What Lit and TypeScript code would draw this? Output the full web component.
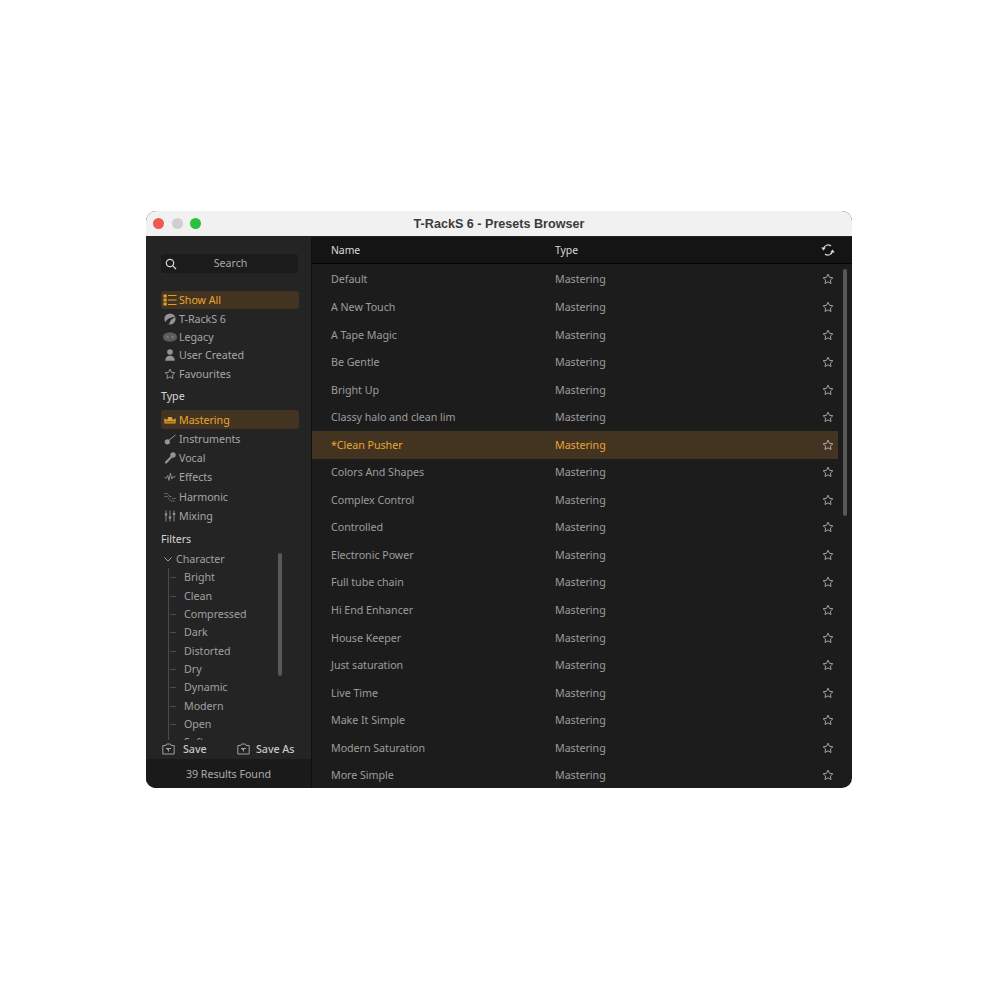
import { LitElement, html, css, svg } from "lit";
import { customElement } from "lit/decorators.js";

const names = ["Default","A New Touch","A Tape Magic","Be Gentle","Bright Up","Classy halo and clean lim","*Clean Pusher","Colors And Shapes","Complex Control","Controlled","Electronic Power","Full tube chain","Hi End Enhancer","House Keeper","Just saturation","Live Time","Make It Simple","Modern Saturation","More Simple"];
const filters = ["Bright","Clean","Compressed","Dark","Distorted","Dry","Dynamic","Modern","Open","Soft"];

const star = (size = 12) => html`<svg width=${size} height=${size} viewBox="0 0 12 12" fill="none" stroke="currentColor" stroke-width="1"><path d="M6 1.100l1.450 3.200 3.450.42-2.550 2.350.68 3.430L6 8.850l-3.030 1.650.68-3.430L1.100 4.720l3.450-.42z"/></svg>`;

const icons: Record<string, unknown> = {
  list: svg`<path fill="currentColor" d="M.5 1.500h3.200v3H.5zM.5 5.500h3.200v3H.5zM.5 9.500h3.200v3H.5z"/><path stroke="currentColor" stroke-width="1" d="M5 2.500h8.500M5 7h8.500M5 11.500h8.500"/>`,
  tracks: svg`<circle cx="7" cy="7" r="5.600" fill="currentColor"/><path d="M2 10.500C4 6.800 8 5 12.600 5 9 6.300 6.800 8.800 6 12.600 4.300 12.400 3 11.700 2 10.500z" fill="#242424"/>`,
  legacy: svg`<path fill="#5e5e5e" d="M0 7c0-3 3-4.500 7-4.500S14 4 14 7s-3 4.500-7 4.500S0 10 0 7z"/><circle cx="4.500" cy="7" r="2" fill="#757575" stroke="#4a4a4a" stroke-width=".6"/><circle cx="9.500" cy="7" r="2" fill="#757575" stroke="#4a4a4a" stroke-width=".6"/>`,
  user: svg`<circle cx="7" cy="4" r="2.800" fill="currentColor"/><path fill="currentColor" d="M2.300 12.800c0-3.500 1.900-5 4.700-5s4.700 1.500 4.700 5z"/>`,
  crown: svg`<path fill="currentColor" d="M1.500 10.500 1.200 5.300l2.900 1.700L5.200 4h3.600l1.100 3 2.900-1.700-.3 5.200z"/><path stroke="#433422" stroke-width=".8" d="M2.500 8.800h9"/>`,
  guitar: svg`<circle cx="4.300" cy="9.800" r="2.600" fill="currentColor"/><path stroke="currentColor" stroke-width="1" d="M5.500 8.500 12.500 3"/>`,
  mic: svg`<circle cx="10" cy="4" r="2.700" fill="currentColor"/><path stroke="currentColor" stroke-width="2.200" stroke-linecap="round" d="M8 6.200 3 11.500"/>`,
  fx: svg`<path fill="none" stroke="currentColor" stroke-width=".9" d="M1.500 7.800h2.200l1.100-2.300L6 10.500l1.400-7.500L8.800 9l1-2.200h2.700"/>`,
  harm: svg`<path fill="none" stroke="currentColor" stroke-width=".8" stroke-dasharray="1.500 .7" d="M1.500 3.500h3l2 3h2.500M1.500 6.500h3l3 4.500h5M9 8.500h3.500"/>`,
  mix: svg`<path stroke="currentColor" stroke-width=".9" d="M3 1.500v11M7 1.500v11M11 1.500v11"/><path stroke="currentColor" stroke-width="1.800" d="M1.800 5.500h2.400M5.800 8.500h2.400M9.800 5h2.400"/>`,
};
const icon = (k: string) => html`<svg class="ic" width="14" height="14" viewBox="0 0 14 14">${icons[k]}</svg>`;
const saveIcon = html`<svg width="13" height="12" viewBox="0 0 13 12" fill="none" stroke="currentColor" stroke-width="1"><path d="M.8 2.500h3l.8-1.500h3.800l.8 1.500h3v8.500H.8z"/><path d="M4 5.500h5M6.500 5.500l-1.500 1.500M6.500 5.500v3"/></svg>`;

const nav = [["list","Show All",true],["tracks","T-RackS 6",false],["legacy","Legacy",false],["user","User Created",false],["star","Favourites",false]] as const;
const types = [["crown","Mastering",true],["guitar","Instruments",false],["mic","Vocal",false],["fx","Effects",false],["harm","Harmonic",false],["mix","Mixing",false]] as const;

@customElement("app-root")
export class AppRoot extends LitElement {
  static styles = css`
    :host { display: block; background: #fff; height: 1000px; box-sizing: border-box; padding: 211px 148px 0 146px; font-family: "Noto Sans", "Open Sans", sans-serif; font-size: 10.7px; letter-spacing: -.04px; }
    .win { position: relative; height: 577px; border-radius: 10px; overflow: hidden; display: flex; flex-direction: column; background: #1c1c1c; }
    .title { height: 26px; box-sizing: border-box; flex: none; display: flex; align-items: center; justify-content: center; background: #f1f1f1; border-bottom: 1px solid #222; color: #3b3b3b; font: bold 12.6px "Liberation Sans", sans-serif; letter-spacing: 0; position: relative; }
    .lights { position: absolute; left: 7px; top: 7px; display: flex; gap: 7.6px; }
    .lights i { width: 11px; height: 11px; border-radius: 50%; }
    .body { flex: 1; display: flex; min-height: 0; }
    .side { width: 166px; box-sizing: border-box; flex: none; display: flex; flex-direction: column; background: #242424; border-right: 1px solid #101010; position: relative; }
    .search { margin: 17px 13px 18px 15px; height: 19px; box-sizing: border-box; flex: none; background: #1b1b1b; border-radius: 3px; display: flex; align-items: center; color: #a8a8a8; position: relative; justify-content: center; padding: 0 0 1px 2px; }
    .search svg { position: absolute; left: 4px; top: 4px; color: #d8d8d8; }
    .item { display: flex; align-items: center; margin: 0 12px 0 15px; padding-left: 2px; gap: 2px; color: #a6a6a6; border-radius: 3px; box-sizing: border-box; }
    .item .sw { color: #949494; }
    .item.nav { height: 18.35px; }
    .item.ty { height: 19.2px; }
    .item.on { background: #433422; color: #eba52f; }
    .item.on .sw { color: #e0a02e; }
    .ic { flex: none; width: 14px; height: 14px; }
    .sw { display: flex; width: 14px; justify-content: center; flex: none; }
    .h { margin-left: 15px; height: 18px; flex: none; display: flex; align-items: center; color: #d6d6d6; }
    .h.t { margin-top: 4.500px; margin-bottom: 5px; }
    .h.f { margin-top: 5px; margin-bottom: 1.500px; }
    .tree { height: 190px; flex: none; overflow: hidden; position: relative; color: #a0a0a0; }
    .char { height: 18.35px; display: flex; align-items: center; padding-left: 17px; gap: 3px; }
    .fl { height: 18.35px; display: flex; align-items: center; padding-left: 38px; position: relative; }
    .fl::before { content: ""; position: absolute; left: 24px; width: 6px; top: 9px; height: 1px; background: #4c4c4c; }
    .line { position: absolute; left: 22px; top: 18px; bottom: 0; width: 1px; background: #4c4c4c; }
    .thumb { position: absolute; background: #585858; border-radius: 2px; width: 4px; }
    .save { height: 19px; flex: none; display: flex; align-items: center; color: #b4b4b4; padding-left: 16px; }
    .save b { font-weight: 500; color: #c8c8c8; }
    .save svg { flex: none; color: #a0a0a0; }
    .s1 { margin-left: 8px; width: 41px; }
    .gap { width: 13px; }
    .s2 { margin-left: 6px; }
    .foot { flex: 1; background: #1a1a1a; display: flex; align-items: center; justify-content: center; color: #acacac; padding-top: 1px; }
    .main { flex: 1; min-width: 0; position: relative; display: flex; flex-direction: column; overflow: hidden; }
    .head { height: 27px; flex: none; background: #141414; border-bottom: 1px solid #050505; box-sizing: border-box; display: grid; grid-template-columns: 224px 1fr 14px; padding-left: 19px; padding-right: 17px; align-items: center; color: #dcdcdc; font-size: 10.4px; }
    .head svg { display: block; color: #d8d8d8; }
    .rows { flex: 1; overflow: hidden; padding-top: 1.7px; }
    .row { height: 27.56px; width: 526px; box-sizing: border-box; display: grid; grid-template-columns: 224px 1fr 12px; padding-left: 19px; padding-right: 4px; align-items: center; color: #9c9c9c; }
    .row svg { display: block; color: #a0a0a0; }
    .row.on { background: #433422; color: #eba52f; }
    .row.on svg { color: #aaa; }
  `;

  render() {
    return html`<div class="win">
      <div class="title">
        <div class="lights"><i style="background:#ee5a52"></i><i style="background:#cfcfcf"></i><i style="background:#27c13f"></i></div>
        T-RackS 6 - Presets Browser
      </div>
      <div class="body">
        <aside class="side">
          <div class="search">
            <svg width="12" height="12" viewBox="0 0 12 12" fill="none" stroke="currentColor" stroke-width="1.2"><circle cx="5" cy="5" r="3.7"/><path d="M7.8 7.8 11 11"/></svg>
            Search
          </div>
          ${nav.map(([k, t, on]) => html`<div class="item nav ${on ? "on" : ""}"><span class="sw">${k === "star" ? star(12) : icon(k)}</span>${t}</div>`)}
          <div class="h t">Type</div>
          ${types.map(([k, t, on]) => html`<div class="item ty ${on ? "on" : ""}"><span class="sw">${icon(k)}</span>${t}</div>`)}
          <div class="h f">Filters</div>
          <div class="tree">
            <div class="char"><svg width="10" height="10" viewBox="0 0 10 10" fill="none" stroke="currentColor"><path d="M1.5 3.5 5 7l3.5-3.5"/></svg>Character</div>
            <div class="line"></div>
            ${filters.map((f) => html`<div class="fl">${f}</div>`)}
          </div>
          <div class="thumb" style="left:132px;top:316px;height:123px"></div>
          <div class="save">${saveIcon}<span class="s1"><b>Save</b></span><span class="gap"></span>${saveIcon}<span class="s2"><b>Save As</b></span></div>
          <div class="foot">39 Results Found</div>
        </aside>
        <section class="main">
          <div class="head">
            <span>Name</span><span>Type</span>
            <svg width="14" height="14" viewBox="0 0 14 14" fill="none" stroke="currentColor" stroke-width="1.2"><path d="M2.6 5.500A4.600 4.600 0 0 1 10 3"/><path d="M11.4 8.500A4.600 4.600 0 0 1 4 11"/><path fill="currentColor" stroke="none" d="M.2 4.500h4.600L2.500 7.500zM13.800 9.500H9.200l2.300-3z"/></svg>
          </div>
          <div class="rows">
            ${names.map((n, i) => html`<div class="row ${i === 6 ? "on" : ""}"><span>${n}</span><span>Mastering</span>${star(12)}</div>`)}
          </div>
          <div class="thumb" style="left:531px;top:32px;height:247px"></div>
        </section>
      </div>
    </div>`;
  }
}
